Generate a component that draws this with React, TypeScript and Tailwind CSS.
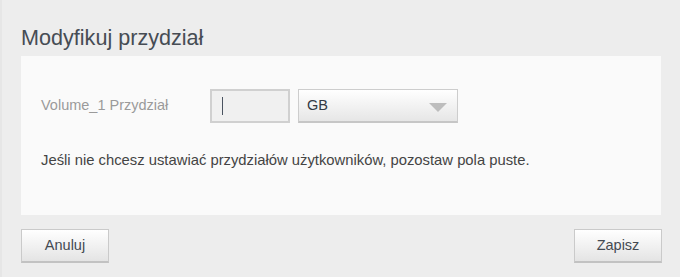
import React, { useState } from "react";

const font = { fontFamily: '"Liberation Sans", Arial, sans-serif' };

function GrayButton({ label }: { label: string }) {
  return (
    <button
      type="button"
      className="h-[34px] w-[88px] border border-[#cacaca] border-b-2 border-b-[#c2c2c2] bg-gradient-to-b from-[#ffffff] to-[#e4e4e4] text-[14.5px] text-[#444a52]"
    >
      {label}
    </button>
  );
}

export default function App() {
  const [quota, setQuota] = useState("");
  return (
    <div
      className="h-[277px] w-[680px] overflow-hidden border-l-2 border-[#e6e6e6] bg-[#ededed] pl-[19px] pr-[19px] pt-[26px]"
      style={font}
    >
      <h1 className="mb-[6px] text-[21.6px] leading-[24px] text-[#464c54]">
        Modyfikuj przydział
      </h1>

      <div className="h-[159px] w-[640px] bg-[#fafafa] px-[20px] pt-[33px]">
        <div className="flex items-center">
          <label className="w-[169px] text-[14.5px] text-[#9a9a9a]">
            Volume_1 Przydział
          </label>
          <div className="flex h-[34px] w-[80px] items-center border-2 border-[#d0d0d0] bg-[#f0f0f0] pl-[10px]">
            <input
              value={quota}
              onChange={(e) => setQuota(e.target.value)}
              className="h-full w-full bg-transparent text-[14px] text-[#333] outline-none"
            />
            <span className="absolute h-[18px] w-px bg-[#4a5360]" />
          </div>
          <div className="ml-[8px] flex h-[34px] w-[160px] items-center justify-between border border-[#cdcdcd] border-b-2 border-b-[#c6c6c6] bg-gradient-to-b from-[#ffffff] to-[#e6e6e6] pl-[8px] pr-[10px]">
            <span className="text-[14.5px] text-[#333a44]">GB</span>
            <svg width="18" height="9" viewBox="0 0 18 9" className="mt-[4px]">
              <path d="M0 0 H18 L9 9 Z" fill="#bdbdbd" />
            </svg>
          </div>
        </div>

        <p className="mt-[27px] text-[14.8px] leading-[20px] text-[#444]">
          Jeśli nie chcesz ustawiać przydziałów użytkowników, pozostaw pola
          puste.
        </p>
      </div>

      <div className="mt-[14px] flex w-[641px] justify-between">
        <GrayButton label="Anuluj" />
        <GrayButton label="Zapisz" />
      </div>
    </div>
  );
}
